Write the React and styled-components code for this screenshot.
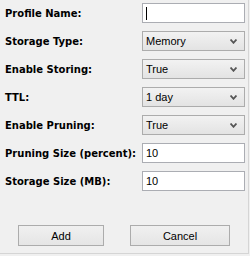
import styled, { createGlobalStyle } from 'styled-components';

const GlobalStyle = createGlobalStyle`
  html, body {
    margin: 0;
    padding: 0;
    background: #f0f0f0;
  }
`;

const Panel = styled.div`
  width: 249px;
  height: 254px;
  box-sizing: border-box;
  background: #f0f0f0;
  border-right: 1px solid #d5d5d5;
  border-bottom: 1px solid #d5d5d5;
  font-family: 'DejaVu Sans', 'Liberation Sans', sans-serif;
  color: #000;
`;

const Form = styled.div`
  display: grid;
  grid-template-columns: 137px 103px;
  grid-auto-rows: 20px;
  row-gap: 8px;
  padding: 3px 0 0 5px;
`;

const Label = styled.label`
  display: flex;
  align-items: center;
  font-size: 10px;
  font-weight: bold;
  white-space: nowrap;
`;

const Field = styled.div`
  box-sizing: border-box;
  height: 20px;
  display: flex;
  align-items: center;
  padding: 0 3px;
  font-family: 'Liberation Sans', sans-serif;
  font-size: 11px;
  border: 1px solid #abadb3;
  background: ${(props) => (props.select ? 'linear-gradient(#f2f2f2, #e3e3e3)' : '#fff')};
  border-color: ${(props) => (props.select ? '#acacac' : '#abadb3')};
`;

const Value = styled.span`
  flex: 1;
`;

const Caret = styled.span`
  width: 1px;
  height: 13px;
  background: #000;
`;

const Chevron = () => (
  <svg width='7' height='5' viewBox='0 0 7 5'>
    <path d='M0.5 0.5 L3.5 3.8 L6.5 0.5' fill='none' stroke='#555' strokeWidth='1.8' />
  </svg>
);

const ChevronBox = styled.span`
  display: flex;
  margin-right: 4px;
`;

const Buttons = styled.div`
  display: flex;
  gap: 26px;
  padding: 0 0 0 18px;
  margin-top: 34px;
`;

const Button = styled.button`
  box-sizing: border-box;
  width: ${(props) => props.width}px;
  height: 21px;
  padding: 0;
  border: 1px solid #acacac;
  background: linear-gradient(#f0f0f0, #e5e5e5);
  font-family: 'Liberation Sans', sans-serif;
  font-size: 11px;
  color: #000;
`;

const Select = ({ value }) => (
  <Field select>
    <Value>{value}</Value>
    <ChevronBox>
      <Chevron />
    </ChevronBox>
  </Field>
);

export default function App() {
  return (
    <>
      <GlobalStyle />
      <Panel>
        <Form>
          <Label>Profile Name:</Label>
          <Field>
            <Caret />
          </Field>
          <Label>Storage Type:</Label>
          <Select value='Memory' />
          <Label>Enable Storing:</Label>
          <Select value='True' />
          <Label>TTL:</Label>
          <Select value='1 day' />
          <Label>Enable Pruning:</Label>
          <Select value='True' />
          <Label>Pruning Size (percent):</Label>
          <Field>10</Field>
          <Label>Storage Size (MB):</Label>
          <Field>10</Field>
        </Form>
        <Buttons>
          <Button width={86}>Add</Button>
          <Button width={100}>Cancel</Button>
        </Buttons>
      </Panel>
    </>
  );
}
